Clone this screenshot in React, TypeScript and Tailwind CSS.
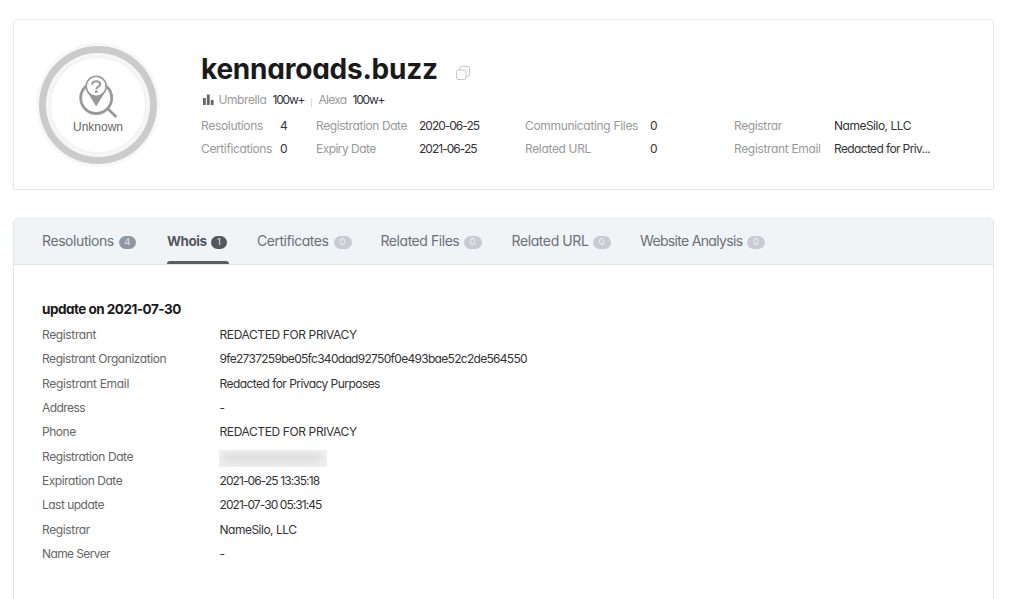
import type { ReactNode } from "react";

type Field = { label: string; value: string; lt: string; vt: string };
type Group = { width: string; labelWidth: string; fields: Field[] };

const groups: Group[] = [
  {
    width: "w-[115px]",
    labelWidth: "w-[79px]",
    fields: [
      { label: "Resolutions", value: "4", lt: "tracking-[-0.32px]", vt: "" },
      { label: "Certifications", value: "0", lt: "tracking-[-0.38px]", vt: "" },
    ],
  },
  {
    width: "w-[209px]",
    labelWidth: "w-[103px]",
    fields: [
      { label: "Registration Date", value: "2020-06-25", lt: "tracking-[-0.41px]", vt: "tracking-[-1px]" },
      { label: "Expiry Date", value: "2021-06-25", lt: "tracking-[-0.54px]", vt: "tracking-[-0.98px]" },
    ],
  },
  {
    width: "w-[209px]",
    labelWidth: "w-[125px]",
    fields: [
      { label: "Communicating Files", value: "0", lt: "tracking-[-0.32px]", vt: "" },
      { label: "Related URL", value: "0", lt: "tracking-[-0.34px]", vt: "" },
    ],
  },
  {
    width: "w-[200px]",
    labelWidth: "w-[100px]",
    fields: [
      { label: "Registrar", value: "NameSilo, LLC", lt: "tracking-[-0.36px]", vt: "tracking-[-0.5px]" },
      { label: "Registrant Email", value: "Redacted for Priv...", lt: "tracking-[-0.34px]", vt: "tracking-[-0.63px]" },
    ],
  },
];

const tabs = [
  { label: "Resolutions", count: "4", width: "w-[125px]", lt: "tracking-[-0.42px]", text: "w-[76.5px]", badge: "bg-[#8f97a3] text-[#dfe3e8] w-[17.5px]", active: false },
  { label: "Whois", count: "1", width: "w-[90px]", lt: "text-[13.5px] tracking-[-0.45px] relative top-px", text: "w-[44px]", badge: "bg-[#54585e] text-[#e6e7e9] w-[16px]", active: true },
  { label: "Certificates", count: "0", width: "w-[123.5px]", lt: "tracking-[-0.46px]", text: "w-[76.5px]", badge: "bg-[#c8cbd4] text-[#eef0f4] w-[18px]", active: false },
  { label: "Related Files", count: "0", width: "w-[131px]", lt: "tracking-[-0.45px]", text: "w-[83px]", badge: "bg-[#c8cbd4] text-[#eef0f4] w-[18px]", active: false },
  { label: "Related URL", count: "0", width: "w-[128.5px]", lt: "tracking-[-0.4px]", text: "w-[81px]", badge: "bg-[#c8cbd4] text-[#eef0f4] w-[18px]", active: false },
  { label: "Website Analysis", count: "0", width: "w-[126px]", lt: "tracking-[-0.67px]", text: "w-[107px]", badge: "bg-[#c8cbd4] text-[#eef0f4] w-[18px]", active: false },
];

const rows: Field[] = [
  { label: "Registrant", value: "REDACTED FOR PRIVACY", lt: "tracking-[-0.36px]", vt: "tracking-[-0.39px]" },
  { label: "Registrant Organization", value: "9fe2737259be05fc340dad92750f0e493bae52c2de564550", lt: "tracking-[-0.44px]", vt: "tracking-[-0.7px]" },
  { label: "Registrant Email", value: "Redacted for Privacy Purposes", lt: "tracking-[-0.31px]", vt: "tracking-[-0.55px]" },
  { label: "Address", value: "-", lt: "tracking-[-0.58px]", vt: "" },
  { label: "Phone", value: "REDACTED FOR PRIVACY", lt: "tracking-[-0.45px]", vt: "tracking-[-0.39px]" },
  { label: "Registration Date", value: "", lt: "tracking-[-0.41px]", vt: "" },
  { label: "Expiration Date", value: "2021-06-25 13:35:18", lt: "tracking-[-0.45px]", vt: "tracking-[-0.91px]" },
  { label: "Last update", value: "2021-07-30 05:31:45", lt: "tracking-[-0.52px]", vt: "tracking-[-0.93px]" },
  { label: "Registrar", value: "NameSilo, LLC", lt: "tracking-[-0.36px]", vt: "tracking-[-0.5px]" },
  { label: "Name Server", value: "-", lt: "tracking-[-0.61px]", vt: "" },
];

function StatusIcon() {
  return (
    <svg className="h-[44px] w-[40px]" viewBox="0 0 40 44" fill="none">
      <circle cx="18.2" cy="23" r="15.5" stroke="#999" strokeWidth="2.8" />
      <path d="M29.5 33.5 38.4 42" stroke="#999" strokeWidth="2.8" />
      <path d="M8.2 5H28.2V14H8.2Z" fill="#fff" />
      <path d="M8.2 15 18.2 31.5 28.2 15Z" fill="#999" />
      <circle cx="18.2" cy="11.3" r="10" fill="#fff" stroke="#999" strokeWidth="1.6" />
      <path d="M14.2 9.7c0-4.6 8-4.3 8-.5 0 2.6-3.9 2.4-3.9 5.1" stroke="#999" strokeWidth="2.1" />
      <path d="M17 15.5h2.6v2.2H17z" fill="#999" />
    </svg>
  );
}

function StatusRing() {
  return (
    <div className="flex size-[124px] shrink-0 items-center justify-center rounded-full bg-[#f7f7f7]">
      <div className="flex size-[118px] items-center justify-center rounded-full bg-[#cbcbcb]">
        <div className="flex size-[104px] items-center justify-center rounded-full bg-[#f7f7f7]">
          <div className="flex size-[94px] flex-col items-center rounded-full bg-white pt-[17px] shadow-[0_0_4px_#ececec]">
            <StatusIcon />
            <span className="font-['Liberation_Sans',sans-serif] text-[12px] leading-[16px] text-[#666]">Unknown</span>
          </div>
        </div>
      </div>
    </div>
  );
}

function Dim({ children, className }: { children: ReactNode; className: string }) {
  return <span className={`shrink-0 text-[#999] ${className}`}>{children}</span>;
}

export default function App() {
  return (
    <div className="h-[599px] w-[1023px] overflow-hidden bg-white pt-[19px] pl-[13px] font-['Inter',sans-serif] text-[12px] whitespace-nowrap text-[#333] [font-feature-settings:'cv11']">
      <section className="flex h-[171px] w-[981px] rounded-t border border-[#e8e8e8] pl-[22px]">
        <div className="pt-[23px]">
          <StatusRing />
        </div>
        <div className="pt-[32px] pl-[41px]">
          <div className="flex h-[34px] items-center">
            <h1 className="w-[255px] text-[28px] leading-[34px] font-bold tracking-[-0.22px] text-[#1a1a1a]">kennaroads.buzz</h1>
            <svg className="mt-[8px] size-[14px]" viewBox="0 0 14 14" fill="none" stroke="#c8c8c8">
              <rect x="0.5" y="4" width="9.5" height="9.5" rx="1.5" />
              <path d="M4 4V2a1.5 1.5 0 0 1 1.5-1.5H12A1.5 1.5 0 0 1 13.5 2v6.5A1.5 1.5 0 0 1 12 10h-2" />
            </svg>
          </div>
          <div className="mt-[6px] flex h-[16px] items-center">
            <svg className="mr-[5px] ml-[1.5px] h-[11px] w-[11px] -translate-y-px" viewBox="0 0 11 11" fill="#666">
              <path d="M0 4h2.8v7H0zM3.9 0.5h2.8V11H3.9zM7.8 6h2.8v5H7.8z" />
            </svg>
            <Dim className="w-[54px] tracking-[-0.41px]">Umbrella</Dim>
            <span className="w-[38px] tracking-[-1.2px]">100w+</span>
            <span className="mt-[4px] h-[9px] w-px bg-[#ddd]" />
            <Dim className="ml-[7px] w-[34px] tracking-[-0.71px]">Alexa</Dim>
            <span className="tracking-[-1.2px]">100w+</span>
          </div>
          <div className="mt-[6px] flex">
            {groups.map((g) => (
              <div key={g.labelWidth} className={g.width}>
                {g.fields.map((f) => (
                  <div key={f.label} className="flex h-[23.5px] items-center">
                    <Dim className={`${g.labelWidth} ${f.lt}`}>{f.label}</Dim>
                    <span className={f.vt}>{f.value}</span>
                  </div>
                ))}
              </div>
            ))}
          </div>
        </div>
      </section>

      <section className="mt-[28px] h-[400px] w-[981px] rounded-t border border-[#e3e6e9]">
        <nav className="flex h-[46px] rounded-t border-b border-[#e3e6e9] bg-[#f0f4f7] pl-[28px] text-[14px] text-[#6b7177]">
          {tabs.map((t) => (
            <div key={t.label} className={t.width}>
              <div className={`relative flex h-[45px] items-center ${t.active ? "w-[62px] font-bold text-[#54585e]" : ""}`}>
                <span className={`mb-[2px] ${t.text} ${t.lt}`}>{t.label}</span>
                <span className={`mt-[2px] flex h-[13px] items-center justify-center rounded-full text-[9.5px] font-normal ${t.badge}`}>{t.count}</span>
                {t.active && <span className="absolute bottom-0 left-0 h-[3px] w-full rounded-t-sm bg-[#5a5e64]" />}
              </div>
            </div>
          ))}
        </nav>
        <div className="pt-[34px] pl-[28px]">
          <h2 className="h-[24px] text-[13.5px] leading-[20px] font-bold tracking-[-0.5px] text-[#1a1a1a]">update on 2021-07-30</h2>
          {rows.map((r, i) => (
            <div key={i} className="flex h-[24.3px] items-center">
              <span className={`w-[177.5px] text-[#666] ${r.lt}`}>{r.label}</span>
              {r.value ? (
                <span className={r.vt}>{r.value}</span>
              ) : (
                <span className="mt-[3px] -ml-px flex h-[17px] w-[108px] items-center overflow-hidden bg-[#f0f0f0] pl-[4px]">
                  <span className="h-[6px] w-[98px] bg-[#d2d2d2] blur-[4px]" />
                </span>
              )}
            </div>
          ))}
        </div>
      </section>
    </div>
  );
}
